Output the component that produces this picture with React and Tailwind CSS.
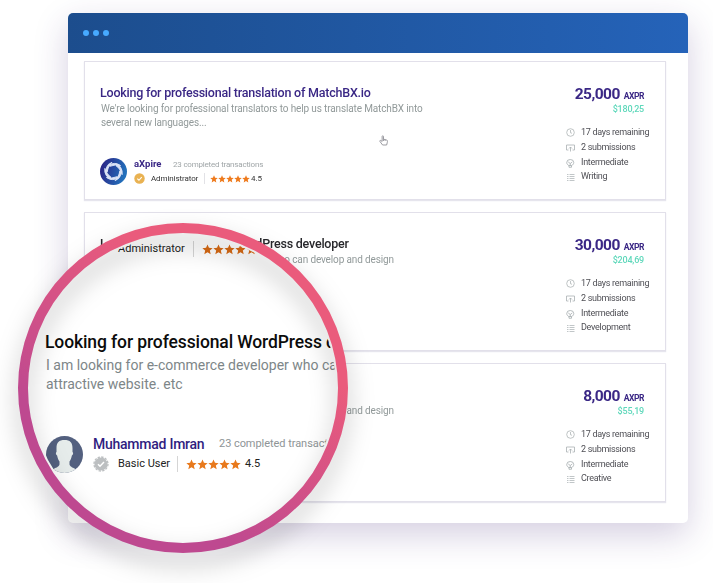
import React from "react";

function Star({ className }) {
  return (
    <svg viewBox="0 0 24 24" className={className} fill="currentColor">
      <path d="M12 1l3.2 7.4 8 .7-6.100 5.300 1.850 7.900L12 18.100l-6.950 4.200 1.850-7.900L.8 9.100l8-.7z" />
    </svg>
  );
}

function Stars({ className, size }) {
  return (
    <div className={"flex shrink-0 " + className}>
      {[0, 1, 2, 3, 4].map((i) => (
        <Star key={i} className={size} />
      ))}
    </div>
  );
}

function SwirlLogo() {
  return (
    <svg viewBox="0 0 54 54" className="size-[27px] shrink-0">
      <defs>
        <linearGradient id="swirl" x1="0" y1="0" x2="1" y2="0.3">
          <stop offset="0" stopColor="#2b1c80" />
          <stop offset="1" stopColor="#2370bb" />
        </linearGradient>
      </defs>
      <circle cx="27" cy="27" r="27" fill="url(#swirl)" />
      {[0, 60, 120, 180, 240, 300].map((a) => (
        <path
          key={a}
          d="M17 14.500Q30 7 41 15Q31 12 20 16.500Z"
          fill="#dbe3f6"
          stroke="#dbe3f6"
          strokeWidth="2"
          strokeLinejoin="round"
          transform={`rotate(${a} 27 27)`}
        />
      ))}
    </svg>
  );
}

function ClockIcon() {
  return (
    <svg viewBox="0 0 18 18" className="size-[9px]" fill="none" stroke="currentColor" strokeWidth="1.500">
      <circle cx="9" cy="9" r="7.600" />
      <path d="M9 4v5.500l3 1" />
    </svg>
  );
}

function SubmissionIcon() {
  return (
    <svg viewBox="0 0 18 18" className="size-[9px]" fill="none" stroke="currentColor" strokeWidth="1.600">
      <path d="M5 12H1V2h16v10h-4M9 15V6M6 9l3-3 3 3" />
    </svg>
  );
}

function LevelIcon() {
  return (
    <svg viewBox="0 0 18 18" className="size-[9px]" fill="none" stroke="currentColor" strokeWidth="1.700">
      <path d="M5.500 13C3 11.500 1.500 9.500 1.500 7a7 6 0 0 1 14 0c0 2.500-1.500 4.500-4 6zM6 13v3.500h5V13M4.500 6l4 3 4-3M8.500 9v4" />
    </svg>
  );
}

function ListIcon() {
  return (
    <svg viewBox="0 0 18 18" className="size-[9px] opacity-80" fill="none" stroke="currentColor" strokeWidth="1.800">
      <path d="M2 3h3M2 7h3M2 11h3M2 15h3M7 3h10M7 7h10M7 11h10M7 15h10" />
    </svg>
  );
}

function MetaRow({ icon, children, className }) {
  return (
    <div className={"flex items-center gap-[6px] " + className}>
      <span className="text-[#a9b0b2]">{icon}</span>
      <span className="whitespace-nowrap text-[9px] tracking-[-0.300px] text-[#4f4f55]">{children}</span>
    </div>
  );
}

function JobCard({ title, titleClass, lines, price, usd, category, children }) {
  return (
    <article className="flex h-[139px] shrink-0 justify-between border border-[#e2e0ea] pl-[15px] shadow-[0_1px_1px_rgba(80,70,130,0.14)]">
      <div className="flex flex-col pt-[22px] blur-[0.4px]">
        <h2 className={"h-[18px] whitespace-nowrap text-[12.5px] leading-[17px] font-medium tracking-[-0.220px] " + titleClass}>
          {title}
        </h2>
        <div className="pl-px text-[10px] leading-[14px] tracking-[-0.140px] whitespace-nowrap text-[#929a9a]">
          {lines.map((l) => (
            <p key={l}>{l}</p>
          ))}
        </div>
        {children}
      </div>
      <div className="flex w-[99px] flex-col pt-[23px] blur-[0.4px]">
        <div className="flex h-[19px] items-baseline justify-end gap-1 pr-[21px] font-bold text-[#3a2785]">
          <span className="text-[15.500px] leading-[19px] tracking-[-0.550px]">{price}</span>
          <span className="text-[8.500px] tracking-[-0.450px]">AXPR</span>
        </div>
        <div className="h-[12px] pr-[21px] text-right text-[9px] leading-[11px] font-medium tracking-[-0.200px] text-[#5fd8bb]">{usd}</div>
        <div className="mt-[9px] flex flex-col">
          <MetaRow className="h-[15px]" icon={<ClockIcon />}>17 days remaining</MetaRow>
          <MetaRow className="h-[16px]" icon={<SubmissionIcon />}>2 submissions</MetaRow>
          <MetaRow className="h-[14px]" icon={<LevelIcon />}>Intermediate</MetaRow>
          <MetaRow className="h-[14px]" icon={<ListIcon />}>{category}</MetaRow>
        </div>
      </div>
    </article>
  );
}

function Lens() {
  return (
    <div className="absolute top-[223px] left-[18px] size-[330px]">
      <div className="absolute inset-[5px] rounded-full bg-white" />
      <div className="absolute inset-[12px] overflow-hidden rounded-full">
        <div className="flex w-[420px] flex-col pl-[16px]">
          <div className="flex h-[28px] items-center pl-[72px]">
            <span className="w-[75px] text-[11px] text-[#222]">Administrator</span>
            <span className="h-4 w-px bg-[#d5d5d5]" />
            <Stars className="ml-[8px] text-[#d86a14]" size="size-[11px]" />
          </div>
          <h2 className="mt-[68px] -ml-px h-[22px] text-[17.500px] leading-[22px] font-medium tracking-[-0.110px] whitespace-nowrap text-[#0c0c0c]">
            Looking for professional WordPress developer
          </h2>
          <p className="mt-[3px] text-[14px] leading-[19px] whitespace-nowrap text-[#7d8688]">
            I am looking for e-commerce developer who can
            <br />
            attractive website. etc
          </p>
          <div className="mt-[42px] flex gap-[10px]">
            <svg viewBox="0 0 37 37" className="size-[37px] shrink-0">
              <defs>
                <clipPath id="avatar">
                  <circle cx="18.500" cy="18.500" r="18.500" />
                </clipPath>
              </defs>
              <g clipPath="url(#avatar)">
                <rect width="37" height="37" fill="#53607f" />
                <path
                  d="M10.500 12C10.500 6.500 13 4 18.500 4s8 2.500 8 8v4c1 .5.7 3-.6 3.500-.6 3-1.500 5-2.400 6v3c1 3 4 3 6.500 5v5H7v-5c2.500-2 5.500-2 6.500-5v-3c-.9-1-1.800-3-2.400-6-1.300-.5-1.600-3-.6-3.500z"
                  fill="#e6eceb"
                />
              </g>
            </svg>
            <div className="flex flex-col">
              <div className="flex h-[16px] items-center whitespace-nowrap">
                <span className="w-[126px] text-[14px] font-medium tracking-[-0.250px] text-[#301d80]">Muhammad Imran</span>
                <span className="text-[11px] tracking-[-0.050px] text-[#8e9496]">23 completed transactions</span>
              </div>
              <div className="mt-[3px] flex h-[18px] items-center">
                <svg viewBox="0 0 24 24" className="size-4 shrink-0">
                  <circle cx="12" cy="12" r="9.800" fill="#bcbfc1" />
                  <circle cx="12" cy="12" r="10.500" fill="none" stroke="#bcbfc1" strokeWidth="2" strokeDasharray="3.600 1.898" />
                  <path d="M7.500 12.300l3 3 6-6.300" fill="none" stroke="#fff" strokeWidth="2.200" />
                </svg>
                <span className="ml-[9px] w-[59px] text-[11px] whitespace-nowrap text-[#222]">Basic User</span>
                <span className="h-4 w-px bg-[#d5d5d5]" />
                <Stars className="ml-[8px] text-[#e8791c]" size="size-[11px]" />
                <span className="ml-1 text-[11px] text-[#222]">4.5</span>
              </div>
            </div>
          </div>
        </div>
      </div>
      <svg
        viewBox="0 0 330 330"
        className="absolute inset-0 size-full overflow-visible drop-shadow-[0_12px_12px_rgba(0,0,0,0.26)]"
      >
        <defs>
          <linearGradient id="ring" x1="0.300" y1="0.750" x2="0.650" y2="0.250">
            <stop offset="0" stopColor="#be4990" />
            <stop offset="1" stopColor="#ea5b7c" />
          </linearGradient>
        </defs>
        <circle cx="165" cy="165" r="160" fill="none" stroke="url(#ring)" strokeWidth="10" />
      </svg>
    </div>
  );
}

export default function App() {
  return (
    <div className="relative h-[583px] w-[713px] overflow-hidden bg-white pt-[13px] pl-[68px] font-['Roboto','Liberation_Sans',sans-serif]">
      <main className="flex h-[510px] w-[620px] flex-col rounded-[5px] bg-white shadow-[0_12px_34px_rgba(65,35,120,0.22)]">
        <header className="flex h-[40px] shrink-0 items-center gap-1 rounded-t-[5px] bg-linear-to-r from-[#1c4d8d] to-[#2563b9] pl-[15px]">
          <span className="size-[6px] rounded-full bg-[#47aaff]" />
          <span className="size-[6px] rounded-full bg-[#47aaff]" />
          <span className="size-[6px] rounded-full bg-[#47aaff]" />
        </header>
        <div className="flex flex-col gap-[12px] pt-[8px] pr-[22px] pl-[16px]">
          <JobCard
            title="Looking for professional translation of MatchBX.io"
            titleClass="text-[#3a2785]"
            lines={["We're looking for professional translators to help us translate MatchBX into", "several new languages..."]}
            price="25,000"
            usd="$180,25"
            category="Writing"
          >
            <div className="mt-[28px] flex gap-[7px]">
              <SwirlLogo />
              <div className="flex flex-col">
                <div className="flex h-[13px] items-center whitespace-nowrap">
                  <span className="w-[39px] text-[9.500px] font-bold text-[#3a2785]">aXpire</span>
                  <span className="text-[8px] tracking-[-0.200px] text-[#a0a6a8]">23 completed transactions</span>
                </div>
                <div className="flex h-[15px] items-center">
                  <svg viewBox="0 0 20 20" className="size-[11px] shrink-0">
                    <circle cx="10" cy="10" r="9.500" fill="#e9b252" />
                    <path d="M6 10.200l3 3 5-5.500" fill="none" stroke="#fff" strokeWidth="2" />
                  </svg>
                  <span className="ml-[6px] w-[53px] text-[8px] tracking-[-0.100px] text-[#333]">Administrator</span>
                  <span className="h-[11px] w-px bg-[#e2e2e6]" />
                  <Stars className="ml-[5px] text-[#ee7a1c]" size="size-[8px]" />
                  <span className="ml-px text-[8px] text-[#333]">4.5</span>
                </div>
              </div>
            </div>
          </JobCard>
          <JobCard
            title="Looking for professional WordPress developer"
            titleClass="text-[#27272b]"
            lines={["I am looking for e-commerce developer who can develop and design"]}
            price="30,000"
            usd="$204,69"
            category="Development"
          />
          <JobCard
            title="Looking for professional WordPress"
            titleClass="text-[#27272b]"
            lines={["I am looking for e-commerce developer who can develop and design"]}
            price="8,000"
            usd="$55,19"
            category="Creative"
          />
        </div>
      </main>
      <svg
        viewBox="0 0 20 24"
        className="absolute top-[135px] left-[379px] h-[11px] w-[9px] blur-[0.3px]"
        fill="#fff"
        stroke="#909096"
        strokeWidth="2"
        strokeLinejoin="round"
      >
        <path d="M7 14V3c0-2 3-2 3 0v6l7 2c2 .5 2 2 1.500 5L17 22H8l-6-8c-1-2 1-3 2.500-1.500zM10 9v4M13.500 10v3" />
      </svg>
      <Lens />
    </div>
  );
}
